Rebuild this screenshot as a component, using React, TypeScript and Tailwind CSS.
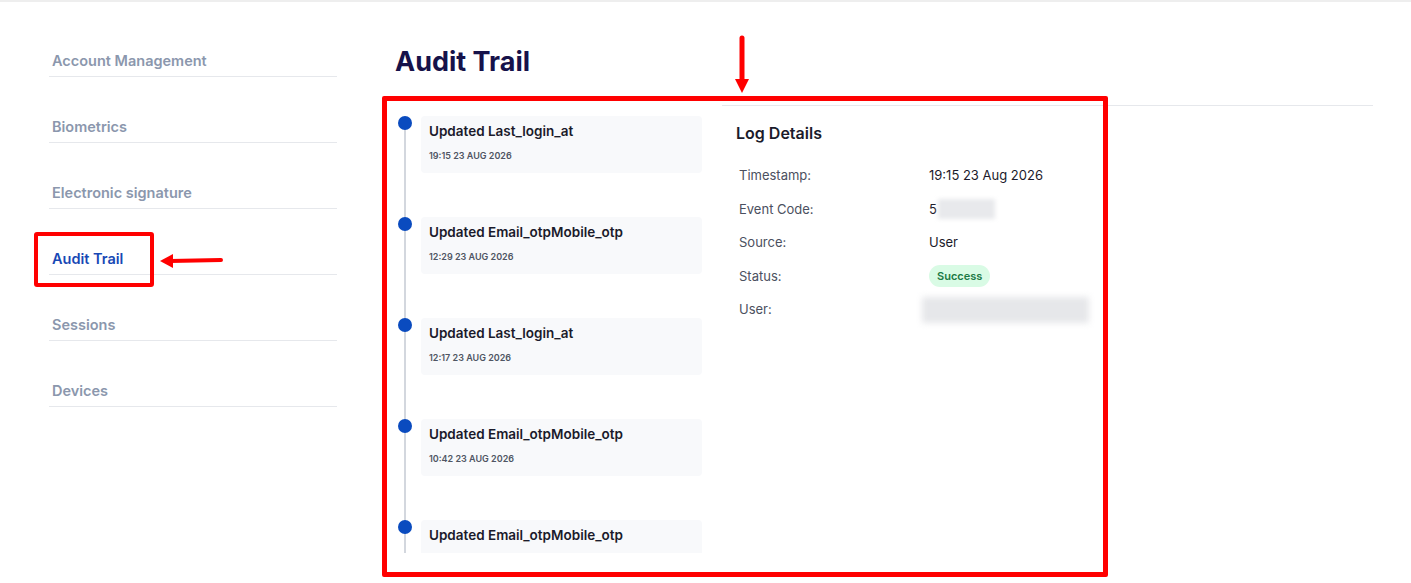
import React from "react";

const navItems = [
  { label: "Account Management", active: false },
  { label: "Biometrics", active: false },
  { label: "Electronic signature", active: false },
  { label: "Audit Trail", active: true },
  { label: "Sessions", active: false },
  { label: "Devices", active: false },
];

// last entry is cut off by the scroll area, its time never shows
const events: { title: string; time?: string }[] = [
  { title: "Updated Last_login_at", time: "19:15 23 AUG 2026" },
  { title: "Updated Email_otpMobile_otp", time: "12:29 23 AUG 2026" },
  { title: "Updated Last_login_at", time: "12:17 23 AUG 2026" },
  { title: "Updated Email_otpMobile_otp", time: "10:42 23 AUG 2026" },
  { title: "Updated Email_otpMobile_otp" },
];

const Sidebar = () => (
  <nav className="w-[288px] shrink-0 pt-[9px]">
    {navItems.map((item) => (
      <div
        key={item.label}
        className={
          "border-b border-[#e6e8ec] pt-[40px] pb-[5px] pl-[3px] text-[14.5px] font-semibold leading-[20px] " +
          (item.active ? "text-[#1848b5]" : "text-[#8b97ad]")
        }
      >
        {item.label}
      </div>
    ))}
  </nav>
);

const Timeline = () => (
  <div className="relative h-[448px] w-[310px] shrink-0 overflow-hidden pt-[11px] pl-[3px]">
    {/* vertical rail */}
    <div className="absolute left-[9px] top-[18px] bottom-0 w-[2px] bg-[#d3d7de]" />
    <div className="flex flex-col gap-[44px]">
      {events.map((ev, i) => (
        <div key={i} className="relative flex gap-[9px]">
          <div className="z-10 h-[14px] w-[14px] shrink-0 rounded-full bg-[#0a4bbf]" />
          <div className="h-[57px] w-[281px] rounded-[4px] bg-[#f8f9fb] px-[8px] pt-[6px]">
            <div className="text-[13.5px] font-semibold leading-[18px] text-[#1b1b2b]">
              {ev.title}
            </div>
            {ev.time && (
              <div className="mt-[10px] text-[9px] font-semibold leading-[12px] text-[#4f5563]">
                {ev.time}
              </div>
            )}
          </div>
        </div>
      ))}
    </div>
  </div>
);

const DetailRow = ({
  label,
  children,
}: {
  label: string;
  children: React.ReactNode;
}) => (
  <div className="flex h-[33.5px] items-center">
    <div className="w-[190px] text-[13px] text-[#4b5060]">{label}</div>
    <div className="text-[13px] text-[#1b1b2b]">{children}</div>
  </div>
);

const LogDetails = () => (
  <div className="flex-1 border-t border-[#e6e8ec] pl-[14px] pt-[15px]">
    <h2 className="text-[16px] font-semibold leading-[24px] text-[#1b1b2b]">
      Log Details
    </h2>
    <div className="mt-[14px] pl-[3px]">
      <DetailRow label="Timestamp:">19:15 23 Aug 2026</DetailRow>
      <DetailRow label="Event Code:">
        <span className="flex items-center">
          5
          <span className="ml-[1px] h-[20px] w-[57px] bg-[#e8e9ec] blur-[2px]" />
        </span>
      </DetailRow>
      <DetailRow label="Source:">User</DetailRow>
      <DetailRow label="Status:">
        <span className="inline-flex h-[22px] items-center rounded-full bg-[#d9fbe5] px-[8px] text-[11px] font-semibold text-[#1c7a45]">
          Success
        </span>
      </DetailRow>
      <DetailRow label="User:">
        <span className="-ml-[7px] block h-[26px] w-[167px] bg-[#e6e7ea] blur-[3px]" />
      </DetailRow>
    </div>
  </div>
);

const App = () => {
  return (
    <div
      className="relative min-h-[583px] border-t-2 border-[#eeeeee] bg-white"
      style={{ fontFamily: "Inter, 'Noto Sans', sans-serif" }}
    >
      <div className="flex pl-[49px] pr-[38px]">
        <Sidebar />
        <main className="ml-[58px] flex-1">
          <h1 className="mt-[44px] text-[27px] font-bold leading-[32px] text-[#16124a]">
            Audit Trail
          </h1>
          <div className="mt-[27px] flex gap-[17px]">
            <Timeline />
            <LogDetails />
          </div>
        </main>
      </div>

      {/* annotation overlays */}
      <div className="pointer-events-none absolute left-[34px] top-[230px] h-[55px] w-[120px] rounded-[3px] border-[4px] border-[#ff0000]" />
      <svg
        className="pointer-events-none absolute left-[158px] top-[250px]"
        width="68"
        height="18"
        viewBox="0 0 68 18"
      >
        <line x1="12" y1="9" x2="63" y2="8" stroke="#ff0000" strokeWidth="4" strokeLinecap="round" />
        <polygon points="2,9 15,2 15,16" fill="#ff0000" />
      </svg>
      <div className="pointer-events-none absolute left-[382px] top-[94px] h-[481px] w-[726px] rounded-[2px] border-[5px] border-[#ff0000]" />
      <svg
        className="pointer-events-none absolute left-[733px] top-[33px]"
        width="18"
        height="60"
        viewBox="0 0 18 60"
      >
        <line x1="9" y1="3" x2="9" y2="46" stroke="#ff0000" strokeWidth="5" strokeLinecap="round" />
        <polygon points="2,44 16,44 9,58" fill="#ff0000" />
      </svg>
    </div>
  );
};

export default App;
